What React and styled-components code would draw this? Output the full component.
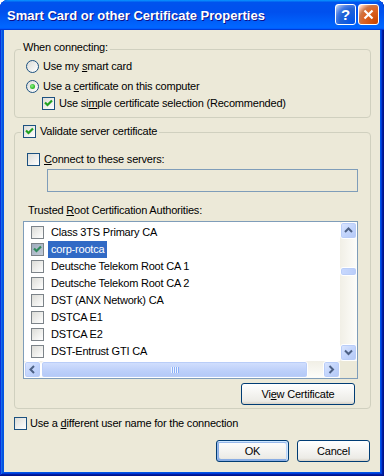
import React from 'react';
import styled, { createGlobalStyle } from 'styled-components';

const Global = createGlobalStyle`
  html, body { margin: 0; padding: 0; background: #fff; }
  body { font-family: "Liberation Sans", Arial, sans-serif; font-size: 11px; letter-spacing: -0.2px; color: #000; }
  * { box-sizing: border-box; }
`;

const Window = styled.div`
  width: 384px;
  height: 476px;
  display: flex;
  flex-direction: column;
  border-radius: 8px 8px 0 0;
  overflow: hidden;
  background: #0055e5;
  box-shadow: inset -1px -1px #00138c, inset 1px 1px #0831d9, inset -2px -2px #001ea0,
    inset 2px 2px #166aee, inset -3px -3px #003bda, inset 3px 3px #0855dd;
`;

const TitleBar = styled.div`
  height: 30px;
  flex: none;
  display: flex;
  align-items: center;
  padding: 0 5px 0 7px;
  background: linear-gradient(180deg, #0997ff, #0053ee 8%, #0050ee 40%, #0066ff 88%, #0066ff 93%, #005bff 95%, #003dd7 96%, #003dd7);
`;

const TitleText = styled.div`
  flex: 1;
  color: #fff;
  font-family: "Liberation Sans", Arial, sans-serif;
  font-weight: 700;
  font-size: 13px;
  letter-spacing: 0;
  text-shadow: 1px 1px #0f1089;
  white-space: nowrap;
  padding-top: 1px;
`;

const TitleButtons = styled.div`
  display: flex;
  gap: 2px;
  padding-bottom: 1px;
`;

const TitleButton = styled.div`
  width: 21px;
  height: 21px;
  border: 1px solid #fff;
  border-radius: 3px;
  display: flex;
  align-items: center;
  justify-content: center;
  color: #fff;
  font-weight: 700;
  font-size: 15px;
  letter-spacing: 0;
  background: ${p => p.$close
    ? 'radial-gradient(circle at 90% 90%, #cc4600 0, #dc6527 55%, #cd7546 70%, #ffccb2 90%, #fff 100%)'
    : 'radial-gradient(circle at 90% 90%, #0054e9 0, #2263d5 55%, #4479e4 70%, #a3bbec 90%, #fff 100%)'};
`;

const Body = styled.div`
  flex: 1;
  padding: 0 4px 4px 4px;
  display: flex;
`;

const Client = styled.div`
  flex: 1;
  background: #ece9d8;
  padding: 19px 9px 10px 10px;
  display: flex;
  flex-direction: column;
`;

const GroupBox = styled.div`
  position: relative;
  border: 1px solid #d0d0bf;
  border-radius: 4px;
  display: flex;
  flex-direction: column;
  align-items: flex-start;
  height: ${p => p.$h}px;
  margin-top: ${p => p.$mt || 0}px;
  padding: ${p => p.$pad};
`;

const Legend = styled.div`
  position: absolute;
  top: ${p => p.$top}px;
  left: 6px;
  padding: 0 2px;
  background: #ece9d8;
  display: flex;
  align-items: center;
  height: ${p => p.$h}px;
  line-height: ${p => p.$h}px;
  white-space: nowrap;
`;

const Row = styled.div`
  display: flex;
  align-items: center;
  height: 16px;
  line-height: 16px;
  white-space: nowrap;
  margin-left: ${p => p.$ml || 0}px;
  margin-top: ${p => p.$mt || 0}px;
`;

const Text = styled.span`
  margin-left: ${p => p.$ml ?? 4}px;
`;

const Key = styled.span`
  text-decoration: underline;
`;

const CheckBoxBox = styled.span`
  width: 13px;
  height: 13px;
  flex: none;
  display: inline-flex;
  align-items: center;
  justify-content: center;
  border: 1px solid ${p => (p.$list ? '#7c8389' : '#1c5180')};
  background: ${p => (p.$sel ? 'linear-gradient(135deg, #9eabbd, #c3ccd8)' : 'linear-gradient(135deg, #dcdcd7, #fff)')};
`;

const CheckBox = ({ checked, list, sel }) => (
  <CheckBoxBox $list={list} $sel={sel}>
    {checked && (
      <svg width="11" height="11" viewBox="0 0 11 11">
        <path d="M2 4.5 L4.5 7 L9 2.5" fill="none" stroke={sel ? '#2f8a5c' : '#21a121'} strokeWidth="2.2" />
      </svg>
    )}
  </CheckBoxBox>
);

const RadioBox = styled.span`
  width: 13px;
  height: 13px;
  flex: none;
  border-radius: 50%;
  border: 1px solid #1c5180;
  background: linear-gradient(135deg, #dcdcd7, #fff);
  display: inline-flex;
  align-items: center;
  justify-content: center;
`;

const RadioDot = styled.span`
  width: 5px;
  height: 5px;
  border-radius: 50%;
  background: radial-gradient(circle at 40% 40%, #8ff08a 0, #38c232 55%, #129613 100%);
`;

const Radio = ({ checked }) => <RadioBox>{checked && <RadioDot />}</RadioBox>;

const TextBox = styled.div`
  width: 311px;
  height: 23px;
  margin: 2px 0 0 32px;
  border: 1px solid #7f9db9;
  background: #ece9d8;
`;

const FieldLabel = styled.div`
  margin: 12px 0 0 13px;
  height: 13px;
  line-height: 13px;
  white-space: nowrap;
`;

const ListBox = styled.div`
  width: 335px;
  height: 158px;
  margin: 4px 0 0 8px;
  border: 1px solid #7f9db9;
  background: #fff;
  display: grid;
  grid-template-columns: 316px 17px;
  grid-template-rows: 139px 17px;
`;

const Items = styled.div`
  overflow: hidden;
  padding-top: 2px;
`;

const Item = styled.div`
  height: 17px;
  display: flex;
  align-items: center;
  padding-left: 7px;
  white-space: nowrap;
`;

const ItemLabel = styled.span`
  margin-left: 4px;
  padding: 0 3px;
  height: 17px;
  line-height: 17px;
  background: ${p => (p.$sel ? '#316ac5' : 'transparent')};
  color: ${p => (p.$sel ? '#fff' : '#000')};
`;

const VScroll = styled.div`
  display: flex;
  flex-direction: column;
  background: linear-gradient(90deg, #f1efe6, #fdfdfa);
`;

const HScroll = styled.div`
  display: flex;
  background: linear-gradient(180deg, #f1efe6, #fdfdfa);
`;

const Track = styled.div`
  flex: 1;
  display: flex;
  flex-direction: ${p => (p.$vertical ? 'column' : 'row')};
`;

const ScrollButton = styled.div`
  width: 17px;
  height: 17px;
  flex: none;
  border: 1px solid #fff;
  border-radius: 3px;
  display: flex;
  align-items: center;
  justify-content: center;
  background: linear-gradient(135deg, #dde7fe, #c3d5fc 50%, #b3c8f6);
  box-shadow: inset 0 0 0 1px #b9cdf8;
`;

const Thumb = styled.div`
  flex: none;
  border: 1px solid #fff;
  border-radius: 3px;
  box-shadow: inset 0 0 0 1px #b9cdf8;
  display: flex;
  align-items: center;
  justify-content: center;
  background: ${p => (p.$vertical
    ? 'linear-gradient(90deg, #c9d9fe, #b9cdf9)'
    : 'linear-gradient(180deg, #d3e0fe, #bccff9 60%, #b3c8f6)')};
  margin-top: ${p => p.$mt || 0}px;
  height: ${p => p.$h}px;
  width: ${p => p.$w}px;
`;

const Corner = styled.div`
  background: #ece9d8;
`;

const Arrow = ({ dir }) => {
  const paths = {
    up: 'M1 5 L4.5 1.5 L8 5',
    down: 'M1 1.5 L4.5 5 L8 1.5',
    left: 'M5 1 L1.5 4.5 L5 8',
    right: 'M1.5 1 L5 4.5 L1.5 8',
  };
  const horiz = dir === 'left' || dir === 'right';
  return (
    <svg width={horiz ? 7 : 9} height={horiz ? 9 : 7} viewBox={horiz ? '0 0 7 9' : '0 0 9 7'}>
      <path d={paths[dir]} fill="none" stroke="#4d6185" strokeWidth="2" />
    </svg>
  );
};

const Grip = () => (
  <svg width="8" height="6" viewBox="0 0 8 6">
    {[0, 2, 4, 6].map(x => (
      <g key={x}>
        <rect x={x} y="0" width="1" height="6" fill="#eef4fe" />
        <rect x={x + 1} y="0" width="1" height="6" fill="#8cb0f8" />
      </g>
    ))}
  </svg>
);

const Button = styled.div`
  width: ${p => p.$w}px;
  height: 22px;
  flex: none;
  border: 1px solid #003c74;
  border-radius: 3px;
  display: flex;
  align-items: center;
  justify-content: center;
  background: linear-gradient(180deg, #fff, #ecebe6 86%, #d6d0c5);
  white-space: nowrap;
  ${p => p.$default && `box-shadow: inset -1px 1px #cee7ff, inset 1px 2px #98b8ea, inset -2px 2px #bcd4f6, inset 1px -1px #89ade4, inset 2px -2px #89ade4;`}
`;

const ViewButton = styled(Button)`
  align-self: flex-end;
  margin: 4px 15px 0 0;
`;

const ButtonRow = styled.div`
  display: flex;
  justify-content: flex-end;
  gap: 8px;
  margin: 9px 1px 0 0;
`;

const items = [
  'Class 3TS Primary CA',
  'corp-rootca',
  'Deutsche Telekom Root CA 1',
  'Deutsche Telekom Root CA 2',
  'DST (ANX Network) CA',
  'DSTCA E1',
  'DSTCA E2',
  'DST-Entrust GTI CA',
];

export default function App() {
  return (
    <>
      <Global />
      <Window>
        <TitleBar>
          <TitleText>Smart Card or other Certificate Properties</TitleText>
          <TitleButtons>
            <TitleButton>?</TitleButton>
            <TitleButton $close>
              <svg width="11" height="11" viewBox="0 0 11 11">
                <path d="M1.5 1.5 L9.5 9.5 M9.5 1.5 L1.5 9.5" stroke="#fff" strokeWidth="2.2" />
              </svg>
            </TitleButton>
          </TitleButtons>
        </TitleBar>
        <Body>
          <Client>
            <GroupBox $h={69} $pad="8px 0 6px 11px">
              <Legend $top={-9} $h={13}>When connecting:</Legend>
              <Row>
                <Radio />
                <Text>Use my <Key>s</Key>mart card</Text>
              </Row>
              <Row $mt={4}>
                <Radio checked />
                <Text>Use a <Key>c</Key>ertificate on this computer</Text>
              </Row>
              <Row $mt={1} $ml={16}>
                <CheckBox checked />
                <Text>Use si<Key>m</Key>ple certificate selection (Recommended)</Text>
              </Row>
            </GroupBox>

            <GroupBox $h={277} $mt={14} $pad="18px 0 3px 0">
              <Legend $top={-10} $h={16}>
                <CheckBox checked />
                <Text>Validate server certificate</Text>
              </Legend>
              <Row $ml={12}>
                <CheckBox />
                <Text><Key>C</Key>onnect to these servers:</Text>
              </Row>
              <TextBox />
              <FieldLabel>Trusted <Key>R</Key>oot Certification Authorities:</FieldLabel>
              <ListBox>
                <Items>
                  {items.map((name, i) => (
                    <Item key={name}>
                      <CheckBox list checked={i === 1} sel={i === 1} />
                      <ItemLabel $sel={i === 1}>{name}</ItemLabel>
                    </Item>
                  ))}
                </Items>
                <VScroll>
                  <ScrollButton><Arrow dir="up" /></ScrollButton>
                  <Track $vertical>
                    <Thumb $vertical $mt={28} $h={9} />
                  </Track>
                  <ScrollButton><Arrow dir="down" /></ScrollButton>
                </VScroll>
                <HScroll>
                  <ScrollButton><Arrow dir="left" /></ScrollButton>
                  <Thumb $w={267} $h={17}><Grip /></Thumb>
                  <Track />
                  <ScrollButton><Arrow dir="right" /></ScrollButton>
                </HScroll>
                <Corner />
              </ListBox>
              <ViewButton $w={114}>Vi<Key>e</Key>w Certificate</ViewButton>
            </GroupBox>

            <Row $mt={6}>
              <CheckBox />
              <Text $ml={3}>Use a <Key>d</Key>ifferent user name for the connection</Text>
            </Row>
            <ButtonRow>
              <Button $w={73} $default>OK</Button>
              <Button $w={73}>Cancel</Button>
            </ButtonRow>
          </Client>
        </Body>
      </Window>
    </>
  );
}
